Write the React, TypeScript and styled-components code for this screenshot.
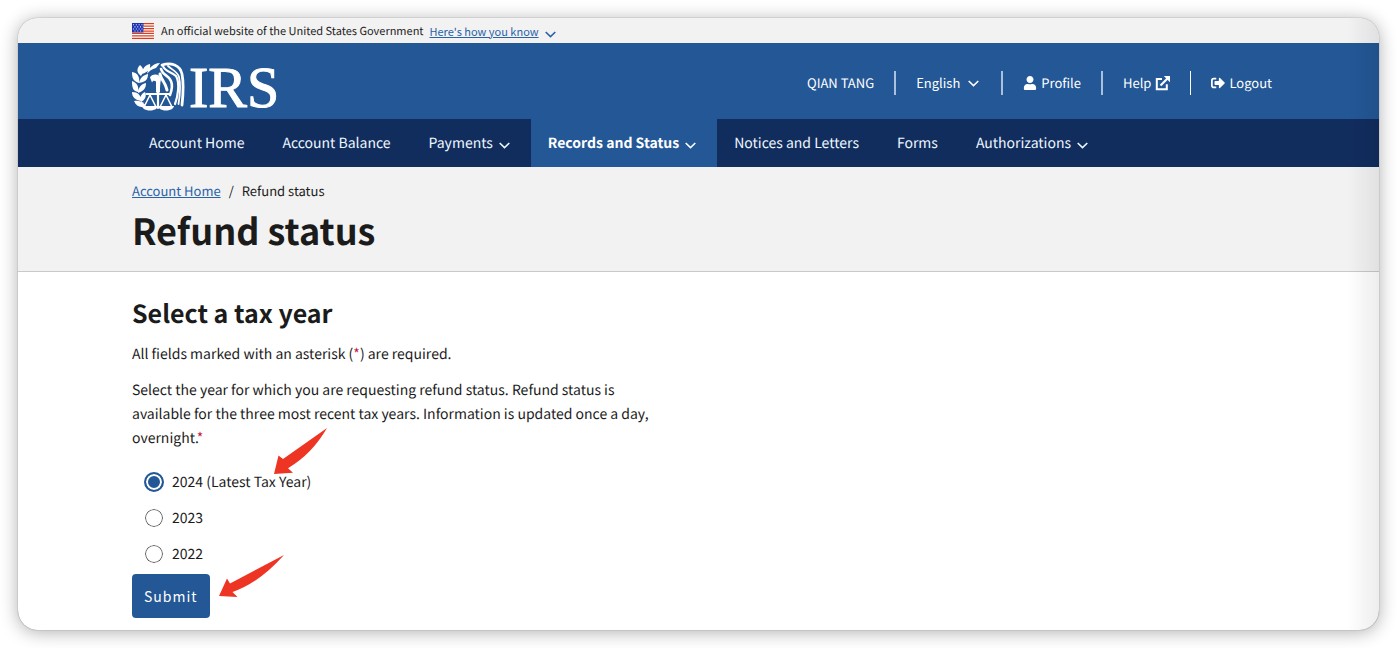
import React from "react";
import styled, { createGlobalStyle } from "styled-components";
import { FaUser, FaSignOutAlt } from "react-icons/fa";

const GlobalStyle = createGlobalStyle`
  *, *::before, *::after { box-sizing: border-box; }
  html { height: 100%; }
  body {
    margin: 0;
    background: #fff;
    color: #1b1b1b;
    font-family: "Noto Sans CJK SC", "Open Sans", sans-serif;
    font-size: 14px;
    line-height: 24px;
    text-rendering: geometricPrecision;
  }
  a { color: inherit; }
`;

const Page = styled.div`
  padding: 18px;
`;

const Card = styled.div`
  position: relative;
  overflow: hidden;
  border-radius: 20px;
  background: #fff;
  box-shadow: 0 0 1px rgba(0, 0, 0, 0.6), 0 2px 18px rgba(0, 0, 0, 0.32);

  &::after {
    content: "";
    position: absolute;
    inset: 0 0 0 auto;
    width: 32px;
    background: linear-gradient(to right, transparent, rgba(0, 0, 0, 0.07));
    pointer-events: none;
  }
`;

const gutter = "padding-left: 114px; padding-right: 107px;";

const GovBanner = styled.div`
  ${gutter}
  display: flex;
  align-items: center;
  height: 25px;
  background: #f2f2f2;
  font-size: 11px;
  line-height: 16px;
`;

const BannerText = styled.span`
  margin: 0 6px 0 7px;
`;

const BannerButton = styled.button`
  display: flex;
  align-items: center;
  gap: 6px;
  padding: 0;
  border: 0;
  background: none;
  color: #2a62a8;
  font: inherit;
  cursor: pointer;

  span { text-decoration: underline; }
  svg { margin-top: 7px; }
`;

const Header = styled.header`
  ${gutter}
  display: flex;
  align-items: center;
  justify-content: space-between;
  height: 76px;
  background: #235796;
  color: #fff;
`;

const Brand = styled.a`
  display: flex;
  padding-top: 12px;
`;

const UtilityList = styled.ul`
  display: flex;
  align-items: center;
  margin: 0;
  padding: 4px 0 0;
  list-style: none;
  font-size: 13px;
`;

const UtilityItem = styled.li`
  display: flex;
  align-items: center;
  height: 24px;
  padding: 0 20px;
  border-left: 2px solid #a9c1dd;

  &:first-child { border-left: 0; }
  &:last-child { padding-right: 0; border-left: 1px solid #fff; }
`;

const UtilityLink = styled.a`
  display: flex;
  align-items: center;
  gap: 4px;
  text-decoration: none;
`;

const UtilityButton = styled.button`
  display: flex;
  align-items: center;
  gap: 8px;
  padding: 0 2px 0 0;
  border: 0;
  background: none;
  color: inherit;
  font: inherit;
  cursor: pointer;
`;

const Nav = styled.nav`
  ${gutter}
  display: flex;
  height: 48px;
  background: #112d5e;
  color: #eef7ff;
`;

const NavLink = styled.a<{ $active?: boolean }>`
  display: flex;
  align-items: center;
  gap: 6px;
  padding: 0 21px 0 17px;
  background: ${({ $active }) => ($active ? "#235796" : "transparent")};
  color: ${({ $active }) => ($active ? "#fff" : "inherit")};
  font-weight: ${({ $active }) => ($active ? 700 : 400)};
  text-decoration: none;
  white-space: nowrap;

  svg { margin-top: 5px; }
`;

const PageHead = styled.div`
  ${gutter}
  padding-top: 12px;
  padding-bottom: 14px;
  border-bottom: 1px solid #c9c9c9;
  background: #f2f2f2;
`;

const Crumbs = styled.ol`
  display: flex;
  gap: 8px;
  margin: 0;
  padding: 0;
  list-style: none;
  font-size: 13px;
  a { color: #2a62a8; }
`;

const Title = styled.h1`
  margin: 0;
  font-size: 36px;
  font-weight: 700;
  line-height: 54px;
`;

const Main = styled.main`
  ${gutter}
  padding-top: 24px;
  padding-bottom: 12px;
`;

const Heading = styled.h2`
  margin: 0 0 12px;
  font-size: 25px;
  font-weight: 700;
  line-height: 34px;
`;

const Text = styled.p`
  margin: 0 0 12px;
`;

const Fieldset = styled.fieldset`
  max-width: 536px;
  margin: 0;
  padding: 0;
  border: 0;
`;

const Legend = styled.legend`
  margin-bottom: 20px;
  padding: 0;
`;

const Required = styled.abbr`
  color: #c21443;
  text-decoration: none;
`;

const Option = styled.label`
  position: relative;
  display: flex;
  align-items: center;
  gap: 8px;
  width: max-content;
  margin-bottom: 12px;
  padding-left: 12px;
`;

const Radio = styled.input`
  appearance: none;
  width: 20px;
  height: 20px;
  margin: 0;
  border: 1px solid #fff;
  border-radius: 50%;
  background: #fff;
  box-shadow: inset 0 0 0 1px #5c5c5c;

  &:checked {
    border: 2px solid #235796;
    background: #235796;
    box-shadow: inset 0 0 0 2px #fff;
  }
`;

const Submit = styled.button`
  display: block;
  height: 44px;
  margin-top: -4px;
  padding: 0 12px;
  border: 0;
  border-radius: 4px;
  background: #235796;
  color: #fff;
  font: inherit;
  letter-spacing: 1px;
  cursor: pointer;
`;

const SubmitRow = styled.div`
  position: relative;
  width: max-content;
`;

const Pointer = styled.svg<{ $left: number; $top: number }>`
  position: absolute;
  left: ${({ $left }) => $left}px;
  top: ${({ $top }) => $top}px;
  pointer-events: none;
`;

const Chevron = () => (
  <svg width="11" height="7" viewBox="0 0 11 7" fill="none" stroke="currentColor" strokeWidth="1.6" aria-hidden="true">
    <path d="M.7 1l4.8 4.6L10.3 1" />
  </svg>
);

const Flag = () => (
  <svg width="22" height="16" viewBox="0 0 22 16" aria-hidden="true">
    <path fill="#fff" d="M0 0h22v16H0z" />
    <path stroke="#db3e1f" strokeWidth="1.25" d="M0 .7h22M0 3.1h22M0 5.6h22M0 8h22M0 10.4h22M0 12.9h22M0 15.3h22" />
    <path fill="#1e33b1" d="M0 0h11.500v9.500H0z" />
    <path stroke="#d8defa" strokeWidth="1.1" strokeDasharray="1.100 1.700" d="M1 1.800h10M2.400 3.900h9M1 6h10M2.400 8h9" />
  </svg>
);

const ExternalIcon = () => (
  <svg width="15" height="15" viewBox="0 0 15 15" fill="none" stroke="currentColor" strokeWidth="2" aria-hidden="true">
    <path d="M7 3H1.800v10.200h10V8.300" />
    <path d="M5.500 9.500l7-7" strokeWidth="2.200" />
    <path d="M8.800 0H15v6.200z" fill="currentColor" stroke="none" />
  </svg>
);

const Logo = () => (
  <svg width="160" height="64" viewBox="0 -8 160 64" role="img" aria-label="IRS">
    <g fill="#fff">
      <path d="M8 2c4 3 4 7 1 11C5 10 4 6 8 2zM18 1c1 5-2 8-8 10 0-5 3-9 8-10zM28 0l-4 5c-4 1-7 3-9 6 1-5 6-11 13-11z" />
      <path d="M0 9c6 1 8 5 7 11C1 18 0 15 0 9zM16 11c0 6-3 8-9 9 1-5 4-8 9-9z" />
      <path d="M0 18c5 2 7 5 6 11-5-1-6-4-6-11zM14 20c0 5-2 8-8 10 0-5 3-9 8-10z" />
      <path d="M0 29c6 0 9 3 9 9-6-1-9-4-9-9zM13 29c2 4 0 8-4 10-2-4 0-8 4-10z" />
      <path d="M2 38c6-1 10 1 12 6-6 1-10-1-12-6z" />
      <path d="M18 14.500c1-3 6-4 9-2l2 4c-1 4-1 8-1 13h-4V18.500c-2-1.500-3-1-4 1z" />
    </g>
    <g fill="none" stroke="#fff" strokeLinecap="round" strokeLinejoin="round">
      <path d="M30 2C39-1 48 2 50 11c2 10 1 22 0 31" strokeWidth="2.800" />
      <path d="M31 3c2 6 8 5 13 10 4 7 2 20-1 28" strokeWidth="2.200" />
      <path d="M36 3c4 4 9 5 11 11 2 8 1 18-.500 27" strokeWidth="1.800" />
      <path d="M29 6c2 7 8 6 10 12 2 5 1 9-1 14" strokeWidth="2.600" />
      <path d="M28 11c1 6 6 9 7 16" strokeWidth="3" />
      <path d="M14.500 31h23M26 29v16" strokeWidth="2.200" />
      <path d="M18 32l-6 12h12zM34 32l-6 12h12z" strokeWidth="1.600" />
    </g>
    <path fill="#fff" d="M10 43h16c-1 6-15 6-16 0zM26 43h16c-1 6-15 6-16 0z" />
    <text x="57" y="44" fill="#fff" fontFamily="'Liberation Serif', serif" fontSize="58" stroke="#fff" strokeWidth="1">IRS</text>
  </svg>
);

const navItems = [
  { label: "Account Home" },
  { label: "Account Balance" },
  { label: "Payments", menu: true },
  { label: "Records and Status", menu: true, active: true },
  { label: "Notices and Letters" },
  { label: "Forms" },
  { label: "Authorizations", menu: true },
];

const years = [
  { value: "2024", label: "2024 (Latest Tax Year)" },
  { value: "2023", label: "2023" },
  { value: "2022", label: "2022" },
];

export default function App() {
  return (
    <>
      <GlobalStyle />
      <Page>
        <Card>
          <GovBanner>
            <Flag />
            <BannerText>An official website of the United States Government</BannerText>
            <BannerButton type="button">
              <span>Here's how you know</span>
              <Chevron />
            </BannerButton>
          </GovBanner>
          <Header>
            <Brand href="#"><Logo /></Brand>
            <UtilityList>
              <UtilityItem>QIAN TANG</UtilityItem>
              <UtilityItem>
                <UtilityButton type="button">English <Chevron /></UtilityButton>
              </UtilityItem>
              <UtilityItem>
                <UtilityLink href="#"><FaUser size={14} />Profile</UtilityLink>
              </UtilityItem>
              <UtilityItem>
                <UtilityLink href="#">Help<ExternalIcon /></UtilityLink>
              </UtilityItem>
              <UtilityItem>
                <UtilityLink href="#"><FaSignOutAlt size={14} />Logout</UtilityLink>
              </UtilityItem>
            </UtilityList>
          </Header>
          <Nav aria-label="Primary">
            {navItems.map(({ label, menu, active }) => (
              <NavLink key={label} href="#" $active={active} aria-current={active ? "page" : undefined}>
                {label}
                {menu && <Chevron />}
              </NavLink>
            ))}
          </Nav>
          <PageHead>
            <Crumbs>
              <li><a href="#">Account Home</a></li>
              <li aria-hidden="true">/</li>
              <li aria-current="page">Refund status</li>
            </Crumbs>
            <Title>Refund status</Title>
          </PageHead>
          <Main>
            <Heading>Select a tax year</Heading>
            <Text>All fields marked with an asterisk (<Required>*</Required>) are required.</Text>
            <form onSubmit={(e) => e.preventDefault()}>
              <Fieldset>
                <Legend>
                  Select the year for which you are requesting refund status. Refund status is available for the
                  three most recent tax years. Information is updated once a day, overnight.<Required>*</Required>
                </Legend>
                {years.map(({ value, label }, i) => (
                  <Option key={value}>
                    <Radio type="radio" name="year" value={value} defaultChecked={i === 0} />
                    {label}
                    {i === 0 && (
                      <Pointer $left={142} $top={-42} width="54" height="48" viewBox="0 0 54 48" aria-hidden="true">
                        <path fill="#ee3524" d="M53 0L9 31 4.500 27.500 0 46l19-1.300-5-4.500Q38 26 53 0z" />
                      </Pointer>
                    )}
                  </Option>
                ))}
              </Fieldset>
              <SubmitRow>
                <Submit type="submit">Submit</Submit>
                <Pointer $left={87} $top={-19} width="66" height="44" viewBox="0 0 66 44" aria-hidden="true">
                  <path fill="#ee3524" d="M65 0L11 28.500 8 23.500 0 41l18.500 1-5-5Q40 28 65 0z" />
                </Pointer>
              </SubmitRow>
            </form>
          </Main>
        </Card>
      </Page>
    </>
  );
}
